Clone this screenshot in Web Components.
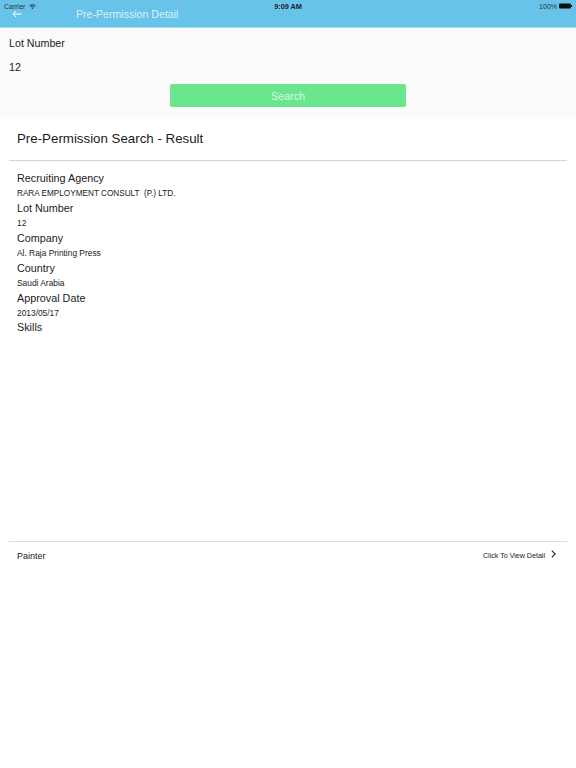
<!DOCTYPE html>
<html>
<head>
<meta charset="utf-8">
<style>
html, body { margin: 0; background: #fff; }
body { font-family: "Liberation Sans", Arial, sans-serif; color: #111; width: 576px; height: 768px; overflow: hidden; }
</style>
</head>
<body>
<nav-header title="Pre-Permission Detail"></nav-header>
<search-form label="Lot Number" value="12" action="Search"></search-form>
<result-panel heading="Pre-Permission Search - Result">
	<info-field caps label="Recruiting Agency" value="RARA EMPLOYMENT CONSULT  (P.) LTD."></info-field>
	<info-field label="Lot Number" value="12"></info-field>
	<info-field label="Company" value="Al. Raja Printing Press"></info-field>
	<info-field label="Country" value="Saudi Arabia"></info-field>
	<info-field label="Approval Date" value="2013/05/17"></info-field>
	<info-field label="Skills"></info-field>
</result-panel>
<skill-row name="Painter" hint="Click To View Detail"></skill-row>

<script>
class NavHeader extends HTMLElement {
	constructor() {
		super();
		var shadowRoot = this.attachShadow({mode: 'open'});
		shadowRoot.innerHTML = `
	<style>
	:host {
		display: block;
		height: 28px;
		box-sizing: border-box;
		border-bottom: 1px solid #9fd9f0;
		background-color: #67c3e7;
		color: #fff;
	}
	.status {
		display: grid;
		grid-template-columns: 1fr auto 1fr;
		align-items: center;
		height: 12px;
		padding: 0 4px;
		font-size: 7px;
		color: #24363f;
	}
	.left {
		display: flex;
		align-items: center;
		gap: 4px;
	}
	.right {
		display: flex;
		align-items: center;
		justify-content: flex-end;
		gap: 2px;
	}
	.time {
		font-size: 7.3px;
		font-weight: bold;
		color: #16242c;
	}
	.bar {
		display: flex;
		align-items: center;
		height: 17px;
		margin-top: -7px;
		padding-left: 12px;
	}
	.title {
		margin-left: 54px;
		font-size: 10.6px;
		color: #d9f1fb;
	}
	svg {
		display: block;
	}
	</style>
	<div class="status">
		<div class="left">
			<span>Carrier</span>
			<svg width="7" height="5" viewBox="0 0 14 10" fill="none" stroke="#16242c" stroke-width="1.7"><path d="M1 3.6a8.6 8.6 0 0 1 12 0M3.3 6a5.3 5.3 0 0 1 7.4 0"/><path d="M7 10 4.9 7.9a3 3 0 0 1 4.2 0z" fill="#16242c" stroke="none"/></svg>
		</div>
		<span class="time">9:09 AM</span>
		<div class="right">
			<span>100%</span>
			<svg width="13" height="6" viewBox="0 0 13 6"><rect x="0" y="0.5" width="11.8" height="5" rx="1" fill="#0a0f12"/><rect x="12" y="2" width="1" height="2" fill="#0a0f12"/></svg>
		</div>
	</div>
	<div class="bar">
		<svg width="10" height="8" viewBox="0 0 10 8" fill="none" stroke="#fff" stroke-width="1"><path d="M9.5 4H1M4 1 1 4l3 3"/></svg>
		<span class="title"></span>
	</div>
	`;
	}

	connectedCallback() {
		this.shadowRoot.querySelector('.title').textContent = this.getAttribute('title');
	}
}

class SearchForm extends HTMLElement {
	constructor() {
		super();
		var shadowRoot = this.attachShadow({mode: 'open'});
		shadowRoot.innerHTML = `
	<style>
	:host {
		display: block;
		height: 90px;
		box-sizing: border-box;
		padding: 8px 9px 0;
		background-color: #fbfbfb;
		font-size: 10.7px;
	}
	.line {
		height: 14px;
		line-height: 14px;
		color: #1c1c1c;
	}
	.value {
		margin-top: 9.5px;
	}
	.action {
		display: flex;
		justify-content: center;
		margin-top: 10.5px;
	}
	button {
		width: 236px;
		height: 23px;
		padding: 0;
		border: 0;
		border-radius: 2px;
		background-color: #6ae68e;
		color: #d8f8e2;
		font: inherit;
	}
	</style>
	<div class="line label"></div>
	<div class="line value"></div>
	<div class="action"><button></button></div>
	`;
	}

	connectedCallback() {
		this.shadowRoot.querySelector('.label').textContent = this.getAttribute('label');
		this.shadowRoot.querySelector('.value').textContent = this.getAttribute('value');
		this.shadowRoot.querySelector('button').textContent = this.getAttribute('action');
	}
}

class ResultPanel extends HTMLElement {
	constructor() {
		super();
		var shadowRoot = this.attachShadow({mode: 'open'});
		shadowRoot.innerHTML = `
	<style>
	:host {
		display: block;
		height: 423px;
		box-sizing: border-box;
		padding: 0 9px;
	}
	h2 {
		height: 42px;
		margin: 0;
		padding-left: 8px;
		border-bottom: 1px solid #d4d4d4;
		font-size: 13.3px;
		font-weight: normal;
		line-height: 41px;
		color: #1a1a1a;
	}
	.fields {
		display: flex;
		flex-direction: column;
		padding: 10px 0 0 8px;
	}
	</style>
	<h2></h2>
	<div class="fields"><slot></slot></div>
	`;
	}

	connectedCallback() {
		this.shadowRoot.querySelector('h2').textContent = this.getAttribute('heading');
	}
}

class InfoField extends HTMLElement {
	constructor() {
		super();
		var shadowRoot = this.attachShadow({mode: 'open'});
		shadowRoot.innerHTML = `
	<style>
	:host {
		display: block;
		height: 29.9px;
	}
	div {
		height: 15px;
		line-height: 15px;
		white-space: pre;
	}
	.label {
		font-size: 10.8px;
		color: #222;
	}
	.value {
		font-size: 8.4px;
		color: #222;
	}
	:host([caps]) .value {
		font-size: 8.2px;
	}
	</style>
	<div class="label"></div>
	<div class="value"></div>
	`;
	}

	connectedCallback() {
		this.shadowRoot.querySelector('.label').textContent = this.getAttribute('label');
		this.shadowRoot.querySelector('.value').textContent = this.getAttribute('value') || '';
	}
}

class SkillRow extends HTMLElement {
	constructor() {
		super();
		var shadowRoot = this.attachShadow({mode: 'open'});
		shadowRoot.innerHTML = `
	<style>
	:host {
		display: flex;
		align-items: center;
		justify-content: space-between;
		height: 27px;
		margin: 0 9px;
		padding: 0 11px 0 8px;
		border-top: 1px solid #dedede;
		color: #222;
	}
	.name {
		font-size: 9px;
	}
	.link {
		display: flex;
		align-items: center;
		gap: 6px;
		font-size: 7.1px;
	}
	svg {
		display: block;
		margin-top: -3px;
	}
	</style>
	<span class="name"></span>
	<span class="link">
		<span class="hint"></span>
		<svg width="5" height="8" viewBox="0 0 5 8" fill="none" stroke="#222" stroke-width="1.1"><path d="M.8 .6 4.2 4 .8 7.4"/></svg>
	</span>
	`;
	}

	connectedCallback() {
		this.shadowRoot.querySelector('.name').textContent = this.getAttribute('name');
		this.shadowRoot.querySelector('.hint').textContent = this.getAttribute('hint');
	}
}

customElements.define('nav-header', NavHeader);
customElements.define('search-form', SearchForm);
customElements.define('result-panel', ResultPanel);
customElements.define('info-field', InfoField);
customElements.define('skill-row', SkillRow);
</script>
</body>
</html>
